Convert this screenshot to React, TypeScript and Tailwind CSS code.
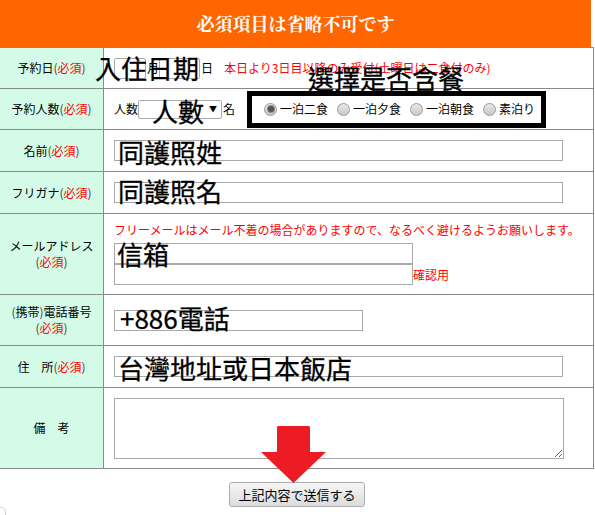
import React from "react";

const Req = () => (
  <>
    <span className="text-[#444]">(</span>
    <span className="text-[#ff0000]">必須</span>
    <span className="text-[#444]">)</span>
  </>
);

const Label = ({ children }: { children: React.ReactNode }) => (
  <div className="w-[104px] shrink-0 bg-[#d3fbe8] border-r border-[#8a8a8a] flex flex-col items-center justify-center text-[12px] leading-[16px] text-black">
    {children}
  </div>
);

const Radio = ({ checked, label }: { checked?: boolean; label: string }) => (
  <div className="flex items-center">
    <span className="w-[13px] h-[13px] rounded-full border border-[#9a9a9a] bg-gradient-to-b from-[#e8e8e8] to-[#c8c8c8] flex items-center justify-center">
      {checked && <span className="w-[6px] h-[6px] rounded-full bg-[#555] ring-1 ring-[#8a8a8a]" />}
    </span>
    <span className="ml-[3px]">{label}</span>
  </div>
);

const Input = ({ w }: { w: string }) => (
  <input readOnly className={`${w} h-[21px] border border-[#a9a9a9] bg-white outline-none`} />
);

const Overlay = ({ x, y, text }: { x: string; y: string; text: string }) => (
  <div className={`absolute ${x} ${y} font-['Noto_Sans_CJK_TC',sans-serif] text-[26px] leading-none text-black whitespace-nowrap [-webkit-text-stroke:0.3px_#000]`}>
    {text}
  </div>
);

export default function App() {
  return (
    <div className="relative w-[595px] h-[515px] overflow-hidden bg-white font-['Noto_Sans_CJK_JP',sans-serif] text-[12px] text-black">
      <div className="w-[594px]">
        <div className="w-[591px] h-[47px] bg-[#ff6600] flex items-center justify-center text-white text-[18px] font-bold font-['Noto_Serif_CJK_JP','Noto_Sans_CJK_JP',serif]">
          必須項目は省略不可です
        </div>
        <div className="border-t border-r border-[#8a8a8a]">
          {/* 予約日 */}
          <div className="flex h-[41px] border-b border-[#8a8a8a]">
            <Label>
              <div>予約日<Req /></div>
            </Label>
            <div className="flex-1 flex items-center pl-[10px]">
              <div className="w-[32px] h-[21px] border border-[#a9a9a9] rounded-[2px] bg-white" />
              <span className="ml-[1px]">月</span>
              <div className="w-[41px] h-[21px] border border-[#a9a9a9] rounded-[2px] bg-white" />
              <span className="ml-[1px]">日</span>
              <span className="ml-[11px] text-[#ff0000]">本日より3日目以降のみ受付(土曜日は二食付のみ)</span>
            </div>
          </div>
          {/* 予約人数 */}
          <div className="flex h-[41px] border-b border-[#8a8a8a]">
            <Label>
              <div>予約人数<Req /></div>
            </Label>
            <div className="flex-1 flex items-center pl-[10px]">
              <span>人数</span>
              <div className="w-[84px] h-[19px] border border-[#a9a9a9] rounded-[2px] bg-white flex items-center justify-end pr-[4px]">
                <span className="text-[8px] leading-none">▼</span>
              </div>
              <span className="ml-[1px]">名</span>
              <div className="ml-[12px] w-[299px] h-[37px] border-[5px] border-black flex items-center pl-[12px] gap-[9px]">
                <Radio checked label="一泊二食" />
                <Radio label="一泊夕食" />
                <Radio label="一泊朝食" />
                <Radio label="素泊り" />
              </div>
            </div>
          </div>
          {/* 名前 */}
          <div className="flex h-[42px] border-b border-[#8a8a8a]">
            <Label>
              <div>名前<Req /></div>
            </Label>
            <div className="flex-1 flex items-center pl-[10px]">
              <Input w="w-[449px]" />
            </div>
          </div>
          {/* フリガナ */}
          <div className="flex h-[42px] border-b border-[#8a8a8a]">
            <Label>
              <div>フリガナ<Req /></div>
            </Label>
            <div className="flex-1 flex items-center pl-[10px]">
              <Input w="w-[449px]" />
            </div>
          </div>
          {/* メール */}
          <div className="flex h-[81px] border-b border-[#8a8a8a]">
            <Label>
              <div>メールアドレス</div>
              <div><Req /></div>
            </Label>
            <div className="flex-1 flex flex-col pl-[10px] pt-[8px]">
              <div className="leading-[16px] text-[#ff0000] whitespace-nowrap">
                フリーメールはメール不着の場合がありますので、なるべく避けるようお願いします。
              </div>
              <div className="mt-[5px]">
                <Input w="w-[299px]" />
              </div>
              <div className="flex items-center">
                <Input w="w-[299px]" />
                <span className="text-[#ff0000]">確認用</span>
              </div>
            </div>
          </div>
          {/* 電話 */}
          <div className="flex h-[51px] border-b border-[#8a8a8a]">
            <Label>
              <div>
                <span className="text-[#444]">(</span>携帯<span className="text-[#444]">)</span>電話番号
              </div>
              <div><Req /></div>
            </Label>
            <div className="flex-1 flex items-center pl-[10px]">
              <Input w="w-[249px]" />
            </div>
          </div>
          {/* 住所 */}
          <div className="flex h-[42px] border-b border-[#8a8a8a]">
            <Label>
              <div>住　所<Req /></div>
            </Label>
            <div className="flex-1 flex items-center pl-[10px]">
              <Input w="w-[449px]" />
            </div>
          </div>
          {/* 備考 */}
          <div className="flex h-[81px] border-b border-[#8a8a8a]">
            <Label>
              <div>備　考</div>
            </Label>
            <div className="flex-1 flex items-center pl-[10px]">
              <textarea readOnly className="w-[450px] h-[61px] border border-[#a9a9a9] bg-white outline-none" />
            </div>
          </div>
        </div>
        <div className="flex justify-center mt-[13px]">
          <button className="h-[25px] px-[8px] border border-[#adadad] rounded-[3px] bg-gradient-to-b from-[#f6f6f6] to-[#dcdcdc] text-[13px] leading-none text-black">
            上記内容で送信する
          </button>
        </div>
      </div>

      {/* annotations */}
      <Overlay x="left-[95px]" y="top-[55px]" text="入住日期" />
      <Overlay x="left-[308px]" y="top-[65px]" text="選擇是否含餐" />
      <Overlay x="left-[152px]" y="top-[98px]" text="人數" />
      <Overlay x="left-[118px]" y="top-[139px]" text="同護照姓" />
      <Overlay x="left-[118px]" y="top-[178px]" text="同護照名" />
      <Overlay x="left-[117px]" y="top-[241px]" text="信箱" />
      <Overlay x="left-[120px]" y="top-[305px]" text="+886電話" />
      <Overlay x="left-[118px]" y="top-[355px]" text="台灣地址或日本飯店" />

      <svg className="absolute left-[261px] top-[426px]" width="65" height="57" viewBox="0 0 65 57">
        <polygon points="16,1 17,0 48,0 49,1 49,26 65,26 32.5,57 0,26 16,26" fill="#ed1c24" />
      </svg>

      <div className="absolute left-[-20px] top-[507px] w-[26px] h-[20px] border border-[#cfcfcf] rounded-[5px]" />
    </div>
  );
}
